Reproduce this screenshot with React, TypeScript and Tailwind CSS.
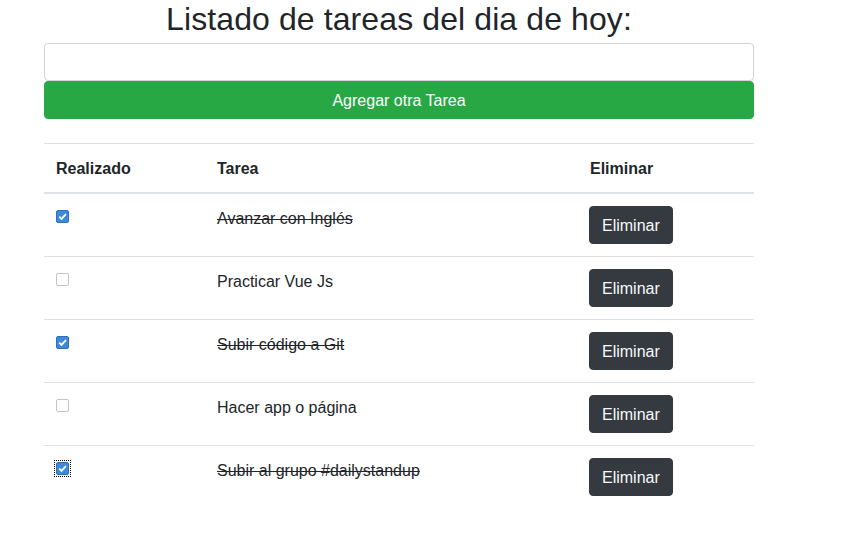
import { useState } from "react";

type Task = { id: number; text: string; done: boolean };

const initialTasks: Task[] = [
	{ id: 1, text: "Avanzar con Inglés", done: true },
	{ id: 2, text: "Practicar Vue Js", done: false },
	{ id: 3, text: "Subir código a Git", done: true },
	{ id: 4, text: "Hacer app o página", done: false },
	{ id: 5, text: "Subir al grupo #dailystandup", done: true },
];

function Check({ checked, focused, onChange }: { checked: boolean; focused?: boolean; onChange: () => void }) {
	return (
		<span
			className={
				"relative mt-[4px] block w-[13px] h-[13px] " +
				(focused ? "outline outline-1 outline-dotted outline-black outline-offset-[1px]" : "")
			}
		>
			<input
				type="checkbox"
				checked={checked}
				onChange={onChange}
				className="block appearance-none w-[13px] h-[13px] m-0 rounded-[2px] border border-[#c4c4c4] bg-white checked:border-[#2c6fbf] checked:bg-[#3c8ad9]"
			/>
			{checked && (
				<svg viewBox="0 0 13 13" className="pointer-events-none absolute left-0 top-0 w-[13px] h-[13px]">
					<path d="M3.2 6.6 L5.5 8.9 L9.9 4.2" fill="none" stroke="white" strokeWidth="1.8" />
				</svg>
			)}
		</span>
	);
}

export default function App() {
	const [tasks, setTasks] = useState<Task[]>(initialTasks);
	const [newTask, setNewTask] = useState("");

	const toggle = (id: number) =>
		setTasks((prev) => prev.map((t) => (t.id === id ? { ...t, done: !t.done } : t)));

	const remove = (id: number) => setTasks((prev) => prev.filter((t) => t.id !== id));

	const add = () => {
		if (!newTask.trim()) return;
		setTasks((prev) => [...prev, { id: Date.now(), text: newTask, done: false }]);
		setNewTask("");
	};

	return (
		<main className="min-h-screen w-full bg-white font-['Liberation_Sans',Arial,sans-serif] text-[#212529]">
			<div className="ml-[44px] w-[710px]">
				<h2 className="text-center text-[32px] leading-[38px] mb-[5px] tracking-[0.1px]">Listado de tareas del dia de hoy:</h2>

				{/* Formulario */}
				<input
					type="text"
					value={newTask}
					onChange={(e) => setNewTask(e.target.value)}
					className="block w-full h-[38px] px-3 text-base bg-white border border-[#ced4da] rounded outline-none"
				/>
				<button
					onClick={add}
					className="block w-full h-[38px] pt-[1px] text-base text-white bg-[#28a745] border border-[#28a745] rounded"
				>
					Agregar otra Tarea
				</button>

				{/* Tabla de tareas */}
				<table className="w-full mt-[24px] border-collapse text-base leading-6">
					<thead>
						<tr className="border-t border-[#dee2e6]">
							<th className="w-[161px] px-3 pt-[13px] pb-[11px] text-left font-bold border-b-2 border-[#dee2e6]">Realizado</th>
							<th className="w-[373px] px-3 pt-[13px] pb-[11px] text-left font-bold border-b-2 border-[#dee2e6]">Tarea</th>
							<th className="px-3 pt-[13px] pb-[11px] text-left font-bold border-b-2 border-[#dee2e6]">Eliminar</th>
						</tr>
					</thead>
					<tbody>
						{tasks.map((task, i) => (
							<tr key={task.id} className="border-t border-[#dee2e6] align-top">
								<td className="p-3">
									<Check checked={task.done} focused={i === tasks.length - 1} onChange={() => toggle(task.id)} />
								</td>
								<td className={"px-3 pt-[13px] pb-[11px] " + (task.done ? "line-through" : "")}>{task.text}</td>
								<td className="py-3 pl-[11px] pr-3">
									<button
										onClick={() => remove(task.id)}
										className="h-[38px] px-3 pt-[1px] text-base text-[#f8f9fa] bg-[#343a40] border border-[#343a40] rounded"
									>
										Eliminar
									</button>
								</td>
							</tr>
						))}
					</tbody>
				</table>
			</div>
		</main>
	);
}
